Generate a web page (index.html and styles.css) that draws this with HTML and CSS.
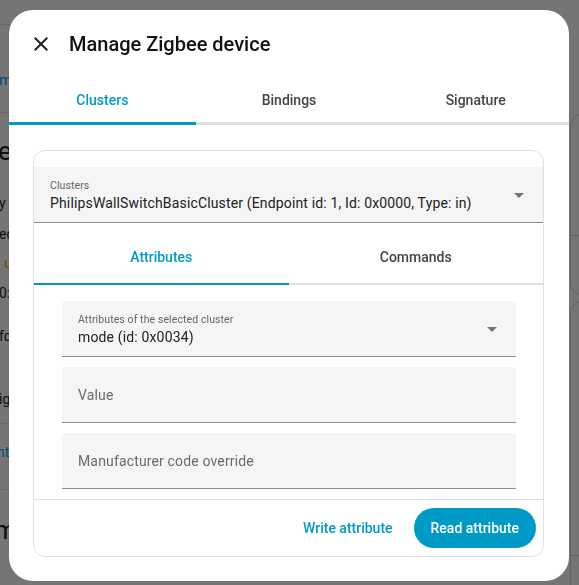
FILE: index.html
```html
<!DOCTYPE html>
<html>
<head>
<meta charset="utf-8">
<link rel="stylesheet" href="styles.css">
</head>
<body>
<div class="page">
  <div class="bg-left">
    <div class="bg-rule r1"></div>
    <div class="bg-link l1">manage clusters</div>
    <div class="bg-rule r2"></div>
    <div class="bg-title t1">evice info</div>
    <div class="bg-text x1">y Name</div>
    <div class="bg-text x2">ed by</div>
    <div class="bg-text x3">: <span class="bg-orange">unavailable</span></div>
    <div class="bg-text x4">0:17:88</div>
    <div class="bg-text x5">fo</div>
    <div class="bg-text x6">ig</div>
    <div class="bg-rule r3"></div>
    <div class="bg-link l2">nt</div>
    <div class="bg-rule r4"></div>
    <div class="bg-title t2">m</div>
  </div>
  <div class="bg-right">
    <div class="bg-card c1"><div class="bg-card-rule"></div></div>
    <div class="bg-card c2"><div class="bg-card-rule r-low"></div></div>
  </div>
</div>
<div class="scrim"></div>

<div class="dialog">
  <div class="dlg-header">
    <svg class="close-icon" viewBox="0 0 24 24" width="24" height="24"><path d="M19,6.41L17.59,5L12,10.59L6.41,5L5,6.41L10.59,12L5,17.59L6.41,19L12,13.41L17.59,19L19,17.59L13.41,12L19,6.41Z"/></svg>
    <div class="dlg-title">Manage Zigbee device</div>
  </div>
  <div class="tabs">
    <div class="tab active">Clusters</div>
    <div class="tab">Bindings</div>
    <div class="tab">Signature</div>
  </div>
  <div class="dlg-content">
    <div class="card">
      <div class="card-top">
        <div class="field select full">
          <div class="field-text">
            <div class="field-label">Clusters</div>
            <div class="field-value">PhilipsWallSwitchBasicCluster (Endpoint id: 1, Id: 0x0000, Type: in)</div>
          </div>
          <svg class="arrow" viewBox="0 0 24 24" width="24" height="24"><path d="M7,10L12,15L17,10H7Z"/></svg>
        </div>
      </div>
      <div class="subtabs">
        <div class="subtab active">Attributes</div>
        <div class="subtab">Commands</div>
      </div>
      <div class="attr-body">
        <div class="field select">
          <div class="field-text">
            <div class="field-label">Attributes of the selected cluster</div>
            <div class="field-value">mode (id: 0x0034)</div>
          </div>
          <svg class="arrow" viewBox="0 0 24 24" width="24" height="24"><path d="M7,10L12,15L17,10H7Z"/></svg>
        </div>
        <div class="field input">
          <div class="placeholder">Value</div>
        </div>
        <div class="field input">
          <div class="placeholder">Manufacturer code override</div>
        </div>
      </div>
      <div class="card-actions">
        <div class="btn-text">Write attribute</div>
        <div class="btn-filled">Read attribute</div>
      </div>
    </div>
  </div>
</div>
</body>
</html>
```

FILE: styles.css
```css
* { box-sizing: border-box; }
html, body { margin: 0; padding: 0; }
body {
  width: 579px;
  height: 585px;
  overflow: hidden;
  font-family: Roboto, "Liberation Sans", sans-serif;
  background: #ffffff;
}

/* background page */
.page {
  display: flex;
  justify-content: space-between;
  height: 585px;
  overflow: hidden;
}
.bg-left {
  width: 9px;
  white-space: nowrap;
  color: #212121;
}
.bg-rule { height: 1px; width: 40px; background: #e0e0e0; }
.r1 { margin-top: 24px; }
.l1 { margin-top: 45px; font-size: 15px; line-height: 20px; color: #03a9f4; margin-left: -1px; }
.r2 { margin-top: 22px; }
.bg-title { font-size: 26px; line-height: 32px; margin-left: -2px; }
.t1 { margin-top: 22px; }
.bg-text { font-size: 14px; line-height: 20px; margin-left: -1px; }
.x1 { margin-top: 26px; }
.x2 { margin-top: 11px; }
.x3 { margin-top: 9px; margin-left: -3px; }
.bg-orange { color: #ff9800; }
.x4 { margin-top: 10px; }
.x5 { margin-top: 23px; }
.x6 { margin-top: 43px; }
.r3 { margin-top: 14px; }
.l2 { margin-top: 18px; font-size: 14px; line-height: 20px; color: #03a9f4; margin-left: -3px; }
.r4 { margin-top: 27px; }
.t2 { margin-top: 24px; margin-left: -6px; }

.bg-right {
  width: 9px;
  padding-top: 114px;
}
.bg-card {
  width: 40px;
  border: 1px solid #d6d6d6;
  border-radius: 12px;
}
.c1 { height: 181px; }
.c2 { height: 300px; margin-top: 6px; }
.bg-card-rule { height: 1px; background: #d6d6d6; margin-top: 120px; }
.r-low { margin-top: 253px; }

.scrim {
  position: fixed;
  inset: 0;
  background: rgba(0, 0, 0, 0.54);
}

/* dialog */
.dialog {
  position: absolute;
  left: 9px;
  top: 10px;
  width: 560px;
  height: 571px;
  background: #ffffff;
  border-radius: 24px;
  overflow: hidden;
  display: flex;
  flex-direction: column;
  color: #212121;
}
.dlg-header {
  height: 68px;
  display: flex;
  align-items: center;
  padding-left: 20px;
  gap: 16px;
  flex-shrink: 0;
}
.close-icon { fill: #212121; flex-shrink: 0; }
.dlg-title {
  font-size: 20px;
  font-weight: 500;
  line-height: 28px;
  color: #111111;
}
.tabs {
  display: flex;
  height: 47px;
  flex-shrink: 0;
}
.tab {
  flex: 1;
  display: flex;
  align-items: center;
  justify-content: center;
  font-size: 14px;
  font-weight: 500;
  color: #444444;
  border-bottom: 3px solid #e0e0e0;
}
.tab.active {
  color: #009ac7;
  border-bottom-color: #009ac7;
}
.dlg-content {
  flex: 1;
  padding: 25px 25px 0 24px;
}
.card {
  border: 1px solid #e0e0e0;
  border-radius: 12px;
  overflow: hidden;
  height: 407px;
  display: flex;
  flex-direction: column;
}
.card-top { padding-top: 16px; }
.field {
  background: #f5f5f5;
  border-bottom: 1px solid #8e8e8e;
  border-radius: 4px 4px 0 0;
  height: 56px;
  display: flex;
  align-items: center;
  padding: 0 12px 0 16px;
  flex-shrink: 0;
}
.field.full { border-radius: 0; }
.field-text {
  flex: 1;
  min-width: 0;
  padding-top: 1px;
}
.field-label {
  font-size: 10.5px;
  letter-spacing: 0.1px;
  line-height: 17px;
  color: #666666;
}
.field-value {
  font-size: 14px;
  letter-spacing: 0.15px;
  line-height: 19px;
  color: #212121;
  white-space: nowrap;
  overflow: hidden;
}
.arrow { fill: #757575; flex-shrink: 0; }
.placeholder {
  font-size: 14px;
  letter-spacing: 0.15px;
  line-height: 20px;
  color: #6b6b6b;
}
.subtabs {
  display: flex;
  height: 62px;
  flex-shrink: 0;
}
.subtab {
  flex: 1;
  display: flex;
  align-items: center;
  justify-content: center;
  padding-top: 7px;
  font-size: 14px;
  font-weight: 500;
  color: #444444;
  border-bottom: 2px solid #e0e0e0;
}
.subtab.active {
  color: #009ac7;
  border-bottom-color: #009ac7;
}
.attr-body {
  flex: 1;
  display: flex;
  flex-direction: column;
  gap: 10px;
  padding: 16px 27px 0 28px;
}
.card-actions {
  height: 57px;
  border-top: 1px solid #e0e0e0;
  display: flex;
  align-items: center;
  justify-content: flex-end;
  gap: 9px;
  padding: 0 7px 0 8px;
  flex-shrink: 0;
}
.btn-text {
  font-size: 14px;
  font-weight: 500;
  color: #009ac7;
  padding: 0 12px;
  line-height: 40px;
}
.btn-filled {
  font-size: 14px;
  font-weight: 500;
  color: #ffffff;
  background: #009ac7;
  border-radius: 20px;
  height: 40px;
  line-height: 40px;
  padding: 0 17px;
}
```
